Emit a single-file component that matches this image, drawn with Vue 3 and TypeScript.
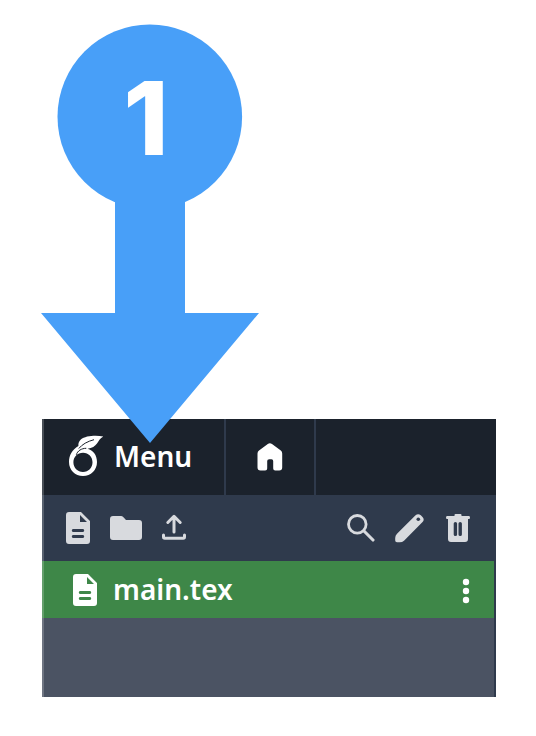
<script setup lang="ts">
const fileName = 'main.tex'
const menuLabel = 'Menu'
const step = 1
</script>

<template>
  <main class="page">
    <section class="panel">
      <header class="topbar">
        <button class="menu">
          <svg class="logo" width="36" height="42" viewBox="0 0 36 42">
            <path fill="currentColor" fill-rule="evenodd" d="M35.300 1.500C28 .2 17.500 .6 12.800 4.600C10.800 6.400 10.200 8.500 10.400 11C4 14.800 1 20.500 1 27C1 35 7 41 15 41S29 35 29 27C29 20 25 15.200 19.600 13.800C24 13.200 27.200 11.300 29 8.600C31 5.700 32 3.200 35.300 1.500ZM15 17.700C20.700 17.700 24.500 22 24.500 27.300C24.500 32.700 20.500 37 15 37S5.400 32.700 5.400 27.300S9.500 17.700 15 17.700Z" />
            <path d="M10.800 13.500C14 9.500 19.500 6.300 26 4.700" fill="none" stroke="#1b222c" stroke-width="1" />
            <path d="M8.300 19.800C9.500 15.800 13.500 13.300 18.300 13.300" fill="none" stroke="#1b222c" stroke-width="1" />
          </svg>
          <span class="label">{{ menuLabel }}</span>
        </button>
        <button class="home" aria-label="Home">
          <svg width="26" height="28" viewBox="0 0 26 28">
            <path fill="currentColor" d="M10.800 .9Q12.900-.5 15 .9L23.800 7.600Q25.200 8.700 25.200 10.600V24.500Q25.200 27.500 22.200 27.500H18.200Q16.200 27.500 16.200 25.500V18Q16.200 16.300 14.500 16.300H12.200Q10.200 16.300 10.200 18V25.500Q10.200 27.500 8.200 27.500H3.500Q.5 27.500 .5 24.500V10.600Q.5 8.700 2 7.600Z" />
          </svg>
        </button>
      </header>
      <div class="toolbar">
        <div class="group left">
          <svg width="24" height="32" viewBox="0 0 24 32">
            <path fill="currentColor" fill-rule="evenodd" d="M3 0H15L24 9V29Q24 32 21 32H3Q0 32 0 29V3Q0 0 3 0ZM14 3V10H21ZM7 17Q5.800 17.200 5.800 18.500T7 20H17Q18.200 19.800 18.200 18.500T17 17ZM7 23Q5.800 23.200 5.800 24.500T7 26H17Q18.200 25.800 18.200 24.500T17 23Z" />
          </svg>
          <svg width="32" height="24" viewBox="0 0 32 24">
            <path fill="currentColor" d="M3 0H11Q12.300 0 13.200 1L16 4H29Q32 4 32 7V21Q32 24 29 24H3Q0 24 0 21V3Q0 0 3 0Z" />
          </svg>
          <svg class="upload" width="24" height="26" viewBox="0 0 24 26" fill="none" stroke="currentColor" stroke-width="3" stroke-linecap="round" stroke-linejoin="round">
            <path d="M12 18V2.500M5.800 8.500L12 2.300L18.200 8.500M1.500 21V23Q1.500 24.300 2.800 24.300H21.200Q22.500 24.300 22.500 23V21" />
          </svg>
        </div>
        <div class="group right">
          <svg width="28" height="28" viewBox="0 0 28 28" fill="none" stroke="currentColor" stroke-linecap="round">
            <circle cx="10.300" cy="10.300" r="8.800" stroke-width="2.800" />
            <path d="M17 17L26 26" stroke-width="3.100" />
          </svg>
          <svg class="pencil" width="29" height="29" viewBox="0 0 29 29">
            <path fill="currentColor" d="M20.300 1.600Q23-1 25.800 1.300L27.500 3.100Q30 5.800 27.300 8.300L9 26.700Q7.200 28.300 4.800 28.300H2Q.2 28.300 .2 26.500V24Q.2 21.600 2 19.800Z" />
            <circle cx="23.300" cy="5.300" r="1.800" fill="#2f3a4c" />
          </svg>
          <svg width="24" height="28" viewBox="0 0 24 28">
            <path fill="currentColor" fill-rule="evenodd" d="M8.500 2V1Q8.500 0 9.500 0H14.500Q15.500 0 15.500 1V2H23Q24 2 24 3.500T23 5H22V25Q22 28 19 28H5Q2 28 2 25V5H1Q0 5 0 3.500T1 2ZM7.700 9.500V20.500Q7.700 22 9.400 22T11.100 20.500V9.500Q11.100 8 9.400 8T7.700 9.500ZM12.500 9.500V20.500Q12.500 22 14.200 22T15.900 20.500V9.500Q15.900 8 14.200 8T12.500 9.500Z" />
          </svg>
        </div>
      </div>
      <div class="tree">
        <div class="file">
          <svg width="24" height="32" viewBox="0 0 24 32">
            <path fill="currentColor" fill-rule="evenodd" d="M3 0H15L24 9V29Q24 32 21 32H3Q0 32 0 29V3Q0 0 3 0ZM14 3V10H21ZM7 17Q5.800 17.200 5.800 18.500T7 20H17Q18.200 19.800 18.200 18.500T17 17ZM7 23Q5.800 23.200 5.800 24.500T7 26H17Q18.200 25.800 18.200 24.500T17 23Z" />
          </svg>
          <span class="name">{{ fileName }}</span>
          <svg class="more" width="8" height="26" viewBox="0 0 8 26" fill="currentColor">
            <circle cx="4" cy="4" r="3.200" />
            <circle cx="4" cy="13" r="3.200" />
            <circle cx="4" cy="22" r="3.200" />
          </svg>
        </div>
      </div>
    </section>
    <svg class="callout" width="260" height="445" viewBox="0 0 260 445">
      <ellipse cx="149.800" cy="116.800" rx="92.300" ry="92.300" fill="#489ff8" />
      <path d="M115 190H185V313H259L150 443L41 313H115Z" fill="#489ff8" />
      <text class="step" x="146" y="155" text-anchor="middle">{{ step }}</text>
    </svg>
  </main>
</template>

<style>
body {
  background: #fff;
}
</style>

<style scoped>
.page {
  position: relative;
  box-sizing: border-box;
  width: 536px;
  height: 736px;
  padding: 419px 40px 39px 42px;
  font-family: "Noto Sans", "Open Sans", sans-serif;
  font-weight: 600;
  font-size: 28px;
  color: #fff;
}
svg {
  display: block;
  flex: none;
}
.panel {
  position: relative;
  display: flex;
  flex-direction: column;
  height: 278px;
  background: #2f3a4c;
}
.panel::before {
  content: "";
  position: absolute;
  inset: 0 auto 0 0;
  width: 2px;
  background: rgba(255, 255, 255, 0.2);
}
.topbar {
  display: flex;
  height: 76px;
  background: #1b222c;
}
button {
  box-sizing: border-box;
  display: flex;
  align-items: center;
  margin: 0;
  padding: 0;
  border: 0;
  border-right: 2px solid #2f3a4c;
  background: none;
  color: inherit;
  font: inherit;
}
.menu {
  width: 184px;
  padding-left: 26px;
  gap: 10px;
}
.logo {
  margin-top: -2px;
}
.label {
  margin-bottom: 2px;
}
.home {
  width: 90px;
  justify-content: center;
}
.toolbar {
  box-sizing: border-box;
  display: flex;
  align-items: center;
  justify-content: space-between;
  height: 66px;
  padding: 0 26.5px 0 24px;
  color: #d8dade;
}
.group {
  display: flex;
  align-items: center;
}
.left {
  gap: 20px;
}
.upload {
  margin-bottom: 2px;
}
.pencil {
  margin: 0 21.5px 0 20px;
}
.tree {
  flex: 1;
  margin-right: 2px;
  background: #4b5363;
}
.file {
  display: flex;
  align-items: center;
  height: 57px;
  padding: 0 24.5px 0 31px;
  background: #3e8748;
}
.name {
  margin: 0 0 1px 16px;
}
.more {
  margin: 3px 0 0 auto;
}
.callout {
  position: absolute;
  top: 0;
  left: 0;
}
.step {
  fill: #fff;
  font: 800 102px Inter, sans-serif;
}
</style>
